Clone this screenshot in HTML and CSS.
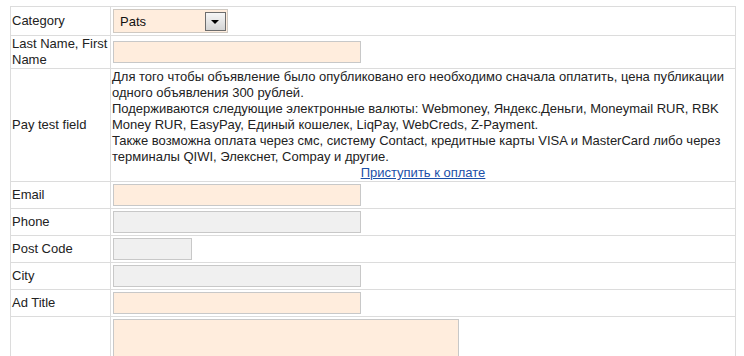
FILE: index.html
```html
<!DOCTYPE html>
<html lang="ru">
<head>
    <meta charset="UTF-8">
    <meta name="viewport" content="width=device-width, initial-scale=1.0">
    <title>Add advert</title>
    <link rel="stylesheet" href="styles.css">
</head>
<body>
    <table class="formTable">
        <tr>
            <td class="label">Category</td>
            <td class="field">
                <span class="selectBox">
                    <select class="select">
                        <option>Pats</option>
                    </select>
                </span>
            </td>
        </tr>
        <tr>
            <td class="label">Last Name, First Name</td>
            <td class="field"><input type="text" class="text"></td>
        </tr>
        <tr>
            <td class="label">Pay test field</td>
            <td class="field payText">
                Для того чтобы объявление было опубликовано его необходимо сначала оплатить, цена публикации одного объявления 300 рублей.<br>
                Подерживаются следующие электронные валюты: Webmoney, Яндекс.Деньги, Moneymail RUR, RBK Money RUR, EasyPay, Единый кошелек, LiqPay, WebCreds, Z-Payment.<br>
                Также возможна оплата через смс, систему Contact, кредитные карты VISA и MasterCard либо через терминалы QIWI, Элекснет, Compay и другие.<br>
                <a href="#" class="payLink">Приступить к оплате</a>
            </td>
        </tr>
        <tr>
            <td class="label">Email</td>
            <td class="field"><input type="text" class="text"></td>
        </tr>
        <tr>
            <td class="label">Phone</td>
            <td class="field"><input type="text" class="text grey"></td>
        </tr>
        <tr>
            <td class="label">Post Code</td>
            <td class="field"><input type="text" class="text grey short"></td>
        </tr>
        <tr>
            <td class="label">City</td>
            <td class="field"><input type="text" class="text grey"></td>
        </tr>
        <tr>
            <td class="label">Ad Title</td>
            <td class="field"><input type="text" class="text"></td>
        </tr>
        <tr>
            <td class="label"></td>
            <td class="field"><textarea class="area"></textarea></td>
        </tr>
    </table>
</body>
</html>
```

FILE: styles.css
```css
body {
    margin: 6px 0 0 10px;
    font-family: "Liberation Sans", Arial, sans-serif;
    font-size: 13px;
    color: #222;
    background-color: #fff;
}

.formTable {
    width: 726px;
    border-collapse: collapse;
}

.formTable td {
    border: 1px solid #dcdcdc;
    padding: 0 1px;
    line-height: 16px;
    vertical-align: middle;
}

.label {
    width: 97px;
}

.payText {
    line-height: 16px;
}

.payLink {
    display: block;
    text-align: center;
    color: #1b4fa8;
    text-decoration: underline;
}

/* text inputs */
.text {
    display: block;
    box-sizing: border-box;
    width: 248px;
    height: 22px;
    margin: 2px 1px;
    border: 1px solid #c8c8c8;
    background-color: #ffeddd;
    font: inherit;
}

.grey {
    background-color: #f0f0f0;
}

.short {
    width: 79px;
}

.area {
    display: block;
    box-sizing: border-box;
    width: 346px;
    height: 110px;
    margin: 2px 1px;
    border: 1px solid #c8c8c8;
    background-color: #ffeddd;
    resize: none;
}

/* select with the old windows arrow button */
.selectBox {
    position: relative;
    display: block;
    width: 115px;
    height: 24px;
    margin: 2px 1px;
}

.select {
    appearance: none;
    -webkit-appearance: none;
    box-sizing: border-box;
    width: 100%;
    height: 100%;
    margin: 0;
    padding: 0 0 0 6px;
    border: 1px solid #cfc9c2;
    border-radius: 0;
    background-color: #ffeddd;
    color: #111;
    font-family: inherit;
    font-size: 13px;
}

.selectBox::after {
    content: "";
    position: absolute;
    top: 3px;
    right: 2px;
    box-sizing: border-box;
    width: 21px;
    height: 19px;
    border: 1px solid #6d6d6d;
    background: linear-gradient(#f6f6f6, #d4d4d4);
}

.selectBox::before {
    content: "";
    position: absolute;
    z-index: 1;
    top: 11px;
    right: 9px;
    border-left: 4px solid transparent;
    border-right: 4px solid transparent;
    border-top: 4px solid #000;
}
```
